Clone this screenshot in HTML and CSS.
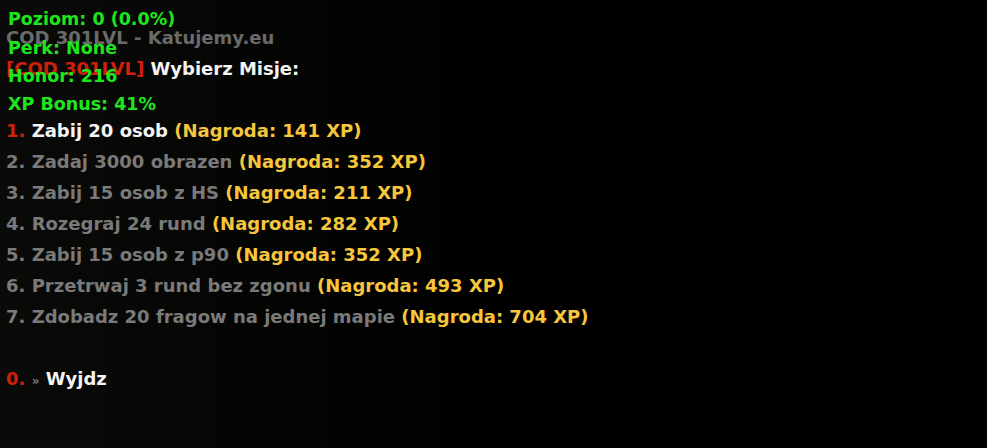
FILE: index.html
```html
<!DOCTYPE html>
<html>
<head>
<meta charset="utf-8">
<link rel="stylesheet" href="styles.css">
</head>
<body>
<div class="screen">
  <div class="menu">
    <div class="line title">COD 301LVL - Katujemy.eu</div>
    <div class="line"><span class="red">[COD 301LVL]</span> <span class="white">Wybierz Misje:</span></div>
    <div class="line"></div>
    <div class="line"><span class="red">1.</span> <span class="white">Zabij 20 osob</span> <span class="yellow">(Nagroda: 141 XP)</span></div>
    <div class="line"><span class="gray">2. Zadaj 3000 obrazen</span> <span class="yellow">(Nagroda: 352 XP)</span></div>
    <div class="line"><span class="gray">3. Zabij 15 osob z HS</span> <span class="yellow">(Nagroda: 211 XP)</span></div>
    <div class="line"><span class="gray">4. Rozegraj 24 rund</span> <span class="yellow">(Nagroda: 282 XP)</span></div>
    <div class="line"><span class="gray">5. Zabij 15 osob z p90</span> <span class="yellow">(Nagroda: 352 XP)</span></div>
    <div class="line"><span class="gray">6. Przetrwaj 3 rund bez zgonu</span> <span class="yellow">(Nagroda: 493 XP)</span></div>
    <div class="line"><span class="gray">7. Zdobadz 20 fragow na jednej mapie</span> <span class="yellow">(Nagroda: 704 XP)</span></div>
    <div class="line"></div>
    <div class="line"><span class="red">0.</span> <span class="gray small">»</span> <span class="white">Wyjdz</span></div>
  </div>
  <div class="hud">
    <div class="hud-line">Klasa: Szturm (Brak)</div>
    <div class="hud-line">Poziom: 0 (0.0%)</div>
    <div class="hud-line">Perk: None</div>
    <div class="hud-line">Honor: 216</div>
    <div class="hud-line">XP Bonus: 41%</div>
  </div>
</div>
</body>
</html>
```

FILE: styles.css
```css
html, body {
  margin: 0;
  padding: 0;
  background: #000;
}
.screen {
  position: relative;
  width: 987px;
  height: 448px;
  overflow: hidden;
  background: linear-gradient(90deg, #0a0a08 0%, #040403 30%, #000 50%);
  font-family: "DejaVu Sans", Verdana, sans-serif;
  font-weight: bold;
  font-size: 18px;
}
.menu {
  padding: 22px 0 0 6px;
}
.line {
  height: 31px;
  line-height: 31px;
  white-space: pre;
}
.title { color: #6a6a6a; }
.red { color: #d0200c; }
.white { color: #f4f4f4; }
.gray { color: #7a7a7a; }
.yellow { color: #f6c63c; }
.small { font-size: 12px; }
.hud {
  position: absolute;
  left: 8px;
  top: -23px;
  color: #1ee61e;
  font-size: 17.5px;
}
.hud-line {
  height: 28.3px;
  line-height: 28.3px;
  white-space: pre;
}
```
